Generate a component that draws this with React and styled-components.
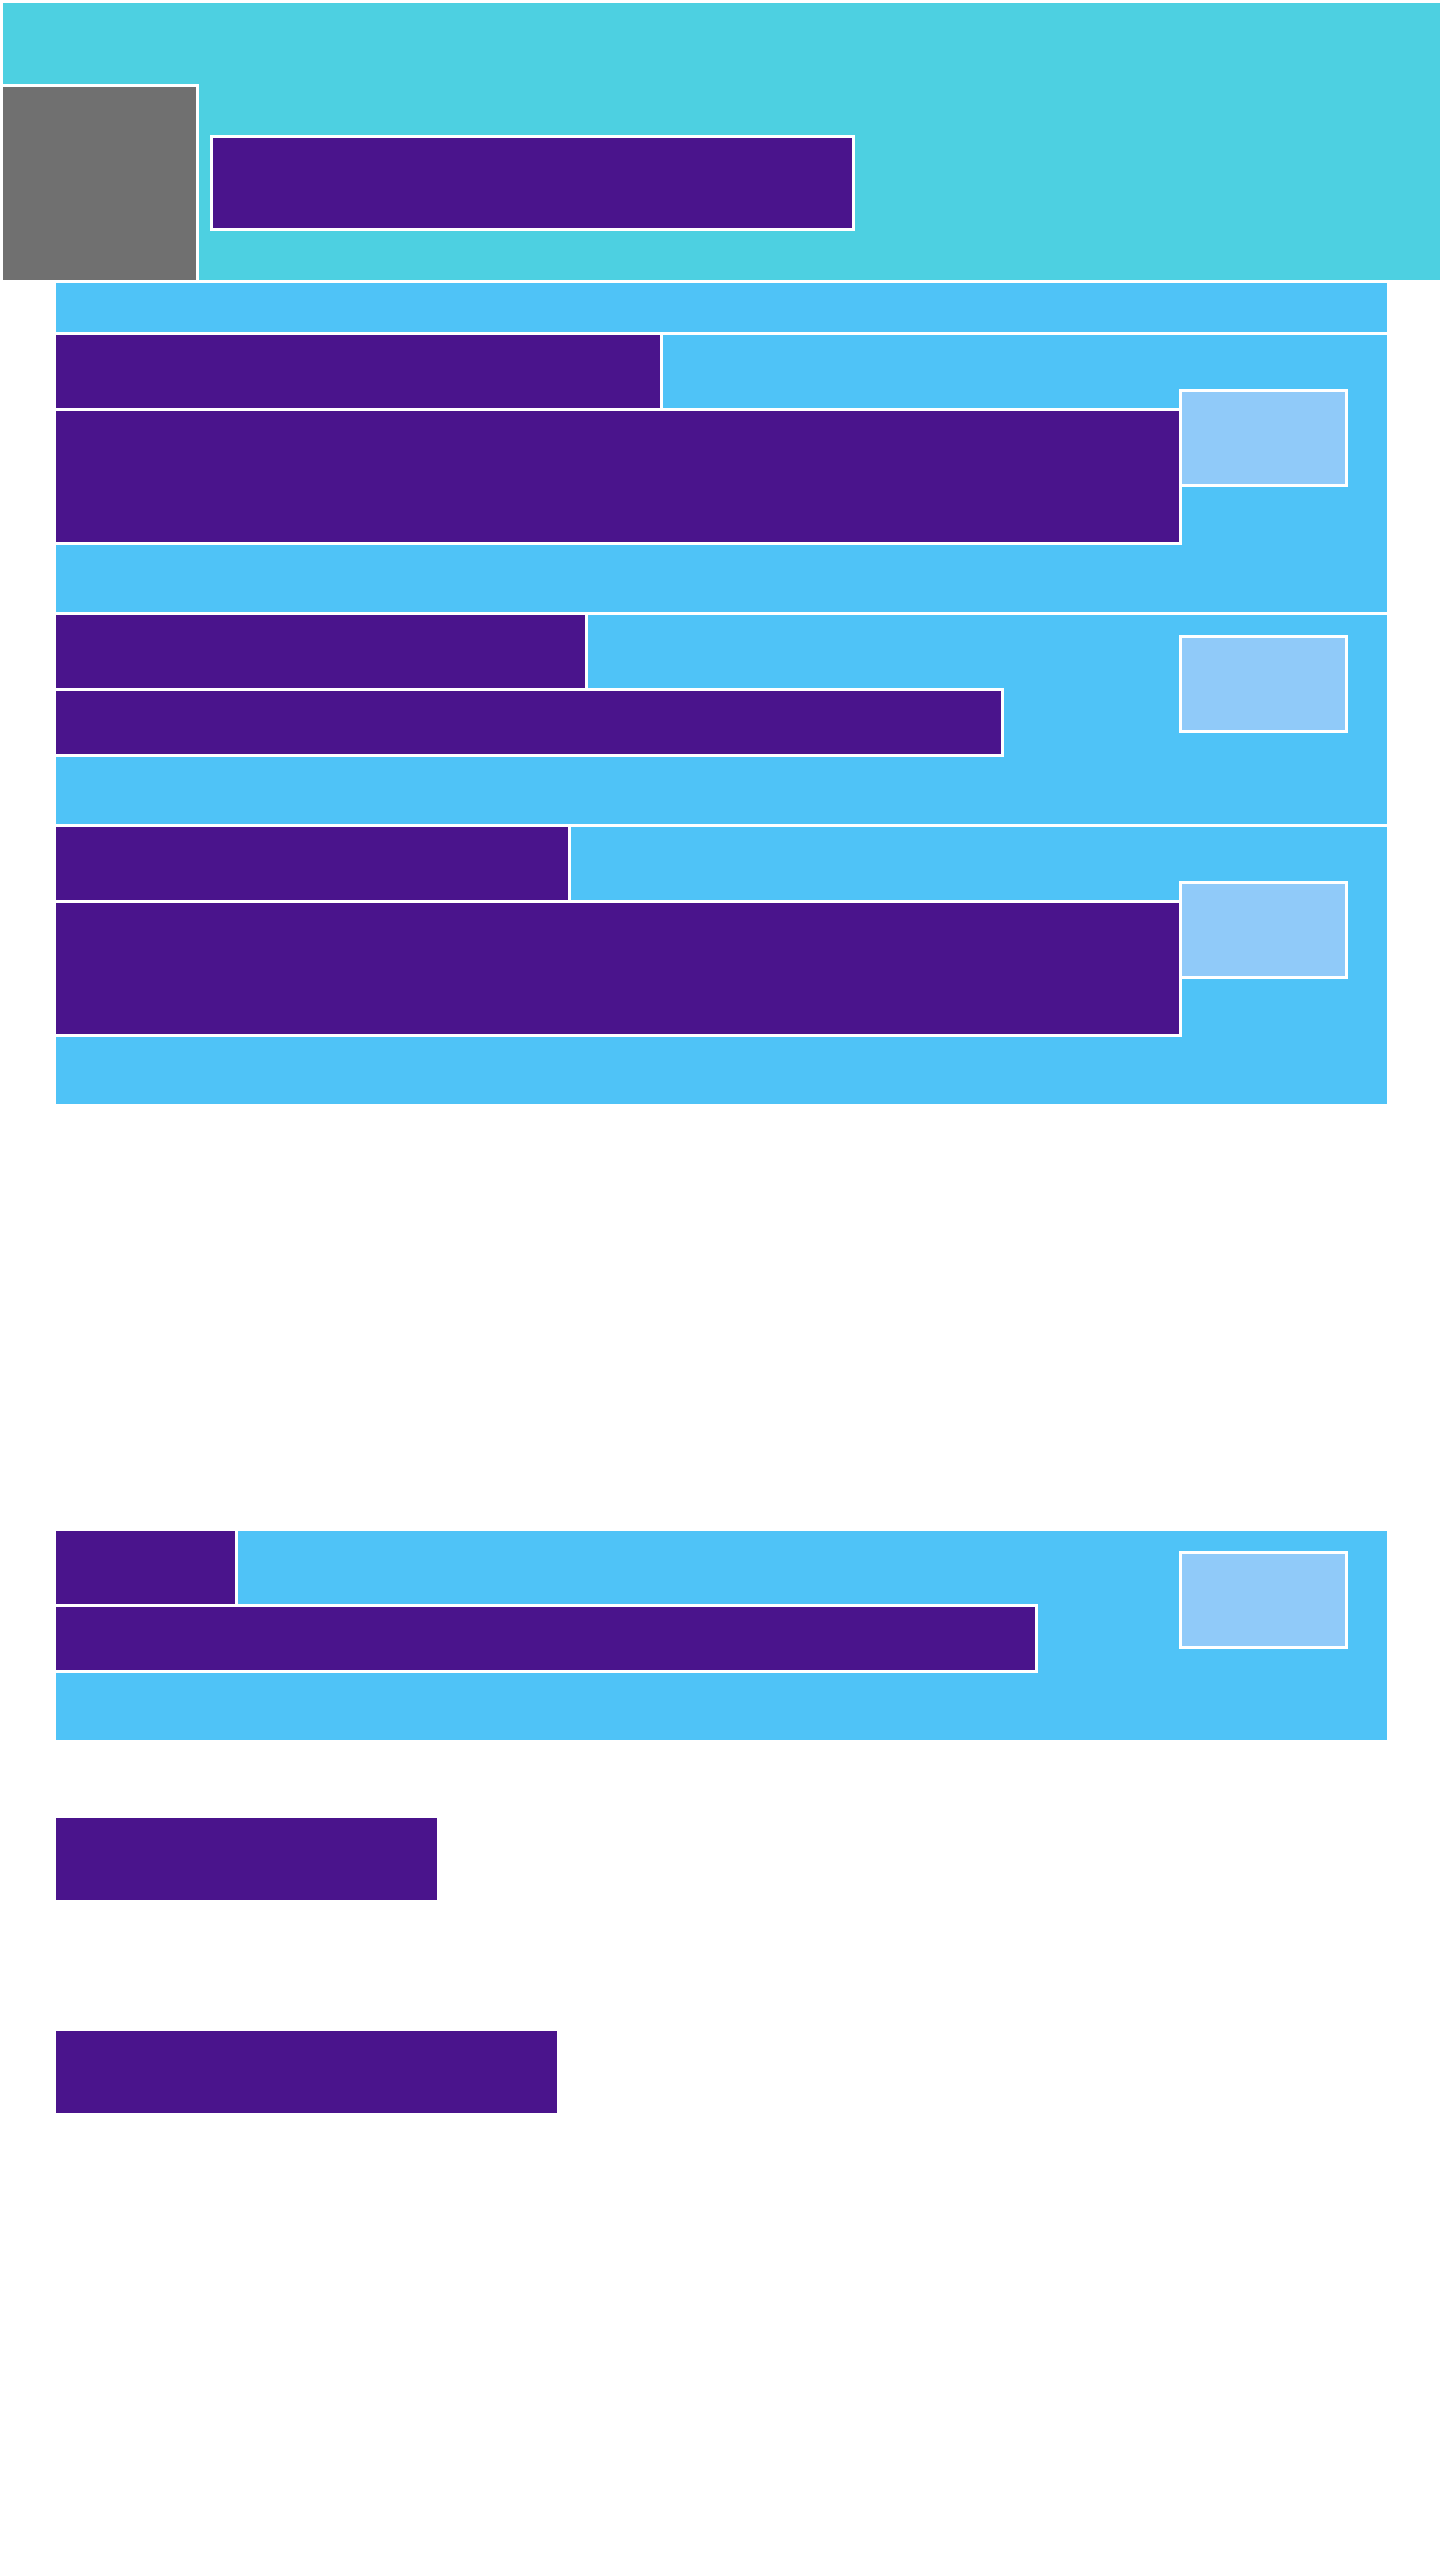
import React from "react";
import styled, { createGlobalStyle } from "styled-components";

const GlobalStyle = createGlobalStyle`
  body {
    margin: 0;
    background: #ffffff;
    font-family: "Liberation Sans", Arial, sans-serif;
  }
`;

const Header = styled.header`
  box-sizing: border-box;
  height: 280px;
  display: flex;
  align-items: flex-end;
  background: #4dd0e1;
  border-top: 3px solid #ffffff;
  border-left: 3px solid #ffffff;
`;

const Avatar = styled.div`
  box-sizing: border-box;
  width: 196px;
  height: 196px;
  flex-shrink: 0;
  background: #707070;
  border-top: 3px solid #ffffff;
  border-right: 3px solid #ffffff;
`;

const HeaderTitle = styled.div`
  box-sizing: border-box;
  width: 645px;
  height: 96px;
  margin: 0 0 49px 11px;
  background: #4a148c;
  border: 3px solid #ffffff;
`;

const Main = styled.main`
  width: 1331px;
  padding: 0 0 0 56px;
`;

const TopBar = styled.div`
  box-sizing: border-box;
  height: 52px;
  background: #4fc3f7;
  border-top: 3px solid #ffffff;
`;

const Card = styled.section`
  background: #4fc3f7;
  border-top: 3px solid #ffffff;
  padding-bottom: 67px;
  margin-top: ${(p) => p.$gap || 0}px;
`;

const Row = styled.div`
  display: flex;
  align-items: center;
`;

const TextCol = styled.div`
  width: 1126px;
  display: flex;
  flex-direction: column;
  align-items: flex-start;
`;

const CardTitle = styled.div`
  box-sizing: border-box;
  height: 73px;
  width: ${(p) => p.$w}px;
  background: #4a148c;
  border-right: 3px solid #ffffff;
`;

const CardBody = styled.div`
  box-sizing: border-box;
  height: ${(p) => (p.$tall ? 137 : 69)}px;
  width: ${(p) => p.$w}px;
  background: #4a148c;
  border: 3px solid #ffffff;
  border-left: none;
`;

const Action = styled.button`
  box-sizing: border-box;
  width: 169px;
  height: 98px;
  flex-shrink: 0;
  margin: 0 39px 4px -3px;
  padding: 0;
  background: #90caf9;
  border: 3px solid #ffffff;
  border-radius: 0;
`;

const Block = styled.div`
  height: 82px;
  width: ${(p) => p.$w}px;
  margin-top: ${(p) => p.$gap}px;
  background: #4a148c;
`;

const cards = [
  { title: 607, body: 1126, tall: true },
  { title: 532, body: 948, tall: false },
  { title: 515, body: 1126, tall: true },
];

export default function App() {
  return (
    <>
      <GlobalStyle />
      <Header>
        <Avatar />
        <HeaderTitle />
      </Header>
      <Main>
        <TopBar />
        {cards.map((c, i) => (
          <Card key={i}>
            <Row>
              <TextCol>
                <CardTitle $w={c.title} />
                <CardBody $w={c.body} $tall={c.tall} />
              </TextCol>
              <Action aria-label="action" />
            </Row>
          </Card>
        ))}
        <Card $gap={424}>
          <Row>
            <TextCol>
              <CardTitle $w={182} />
              <CardBody $w={982} />
            </TextCol>
            <Action aria-label="action" />
          </Row>
        </Card>
        <Block $w={381} $gap={78} />
        <Block $w={501} $gap={131} />
      </Main>
    </>
  );
}
